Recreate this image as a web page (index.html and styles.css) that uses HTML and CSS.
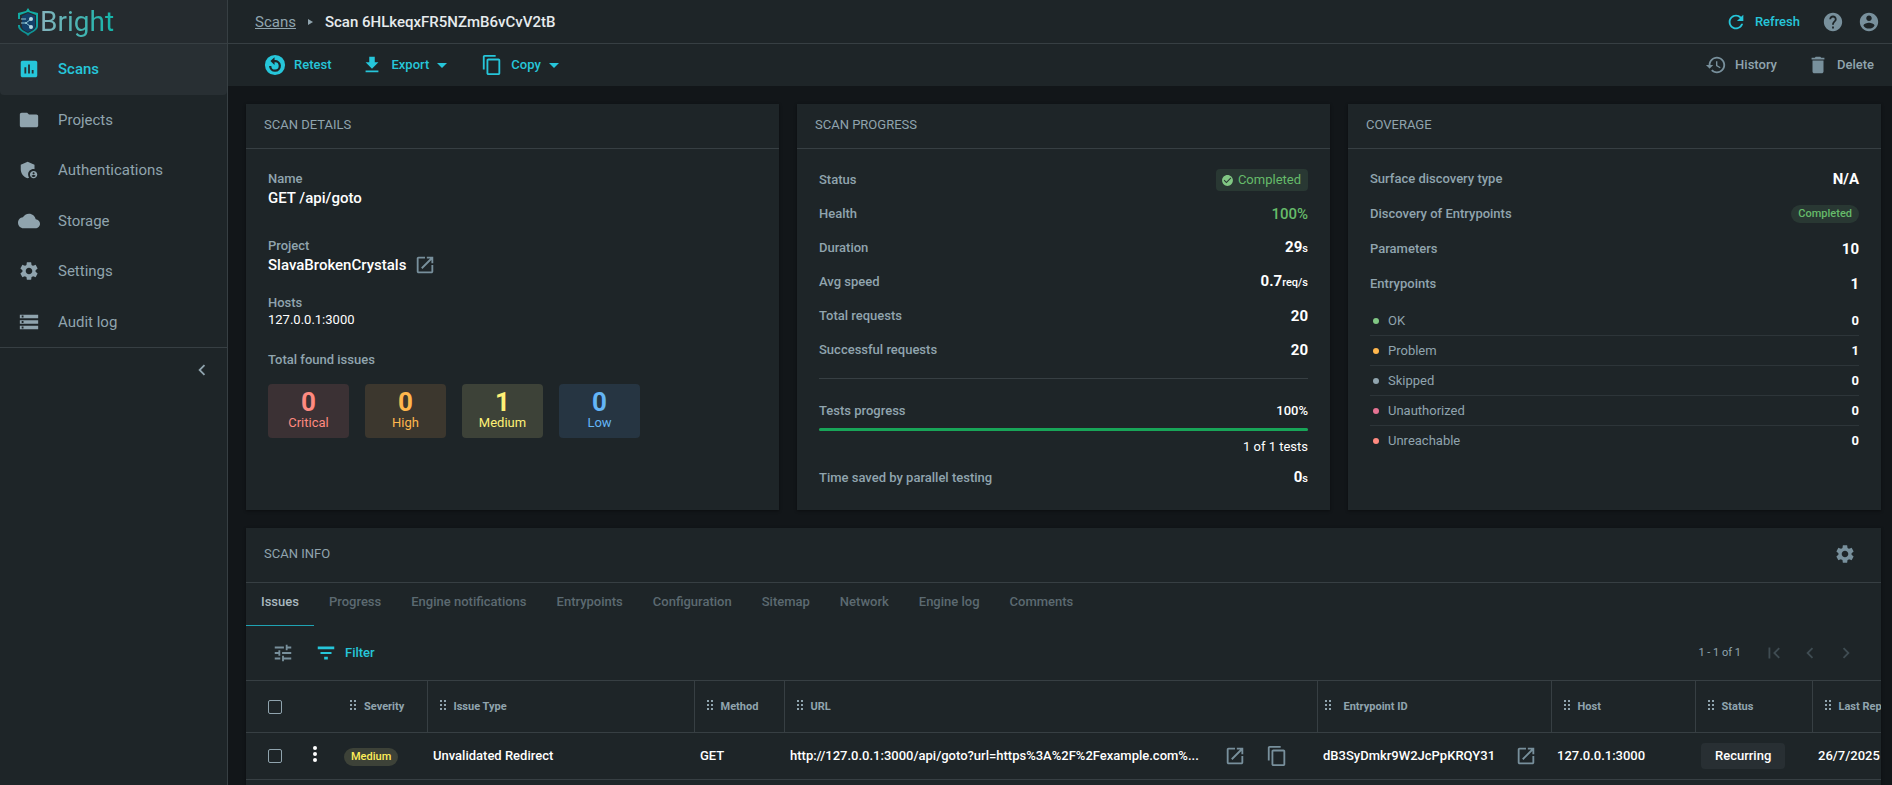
FILE: index.html
```
<!DOCTYPE html>
<html lang="en">
<head>
  <meta charset="UTF-8">
  <meta name="viewport" content="width=device-width, initial-scale=1.0">
  <title>Scan 6HLkeqxFR5NZmB6vCvV2tB</title>
  <link rel="stylesheet" href="styles.css">
</head>
<body>
  <!-- shared icons -->
  <svg class="sprite" aria-hidden="true">
    <symbol id="i-assessment" viewBox="0 0 24 24"><path d="M19 3H5c-1.1 0-2 .9-2 2v14c0 1.1.9 2 2 2h14c1.1 0 2-.9 2-2V5c0-1.1-.9-2-2-2zM9 17H7v-7h2v7zm4 0h-2V7h2v10zm4 0h-2v-4h2v4z"/></symbol>
    <symbol id="i-folder" viewBox="0 0 24 24"><path d="M10 4H4c-1.1 0-2 .9-2 2v12c0 1.1.9 2 2 2h16c1.1 0 2-.9 2-2V8c0-1.1-.9-2-2-2h-8l-2-2z"/></symbol>
    <symbol id="i-shield" viewBox="0 0 24 24"><path d="M17 11c.34 0 .67.04 1 .09V6.27L10.500 3 3 6.270v4.910c0 4.540 3.200 8.790 7.500 9.820.55-.13 1.080-.32 1.600-.55-.69-.98-1.100-2.170-1.100-3.450 0-3.310 2.690-6 6-6z"/><path d="M17 13c-2.210 0-4 1.790-4 4s1.790 4 4 4 4-1.790 4-4-1.790-4-4-4zm0 1.380c.62 0 1.120.51 1.120 1.120s-.51 1.120-1.120 1.120-1.120-.51-1.120-1.120.5-1.120 1.120-1.120zm0 5.370c-.93 0-1.740-.46-2.240-1.170.05-.72 1.510-1.080 2.240-1.080s2.190.36 2.240 1.080c-.5.71-1.310 1.170-2.240 1.170z"/></symbol>
    <symbol id="i-cloud" viewBox="0 0 24 24"><path d="M19.350 10.040C18.670 6.590 15.640 4 12 4 9.110 4 6.600 5.640 5.350 8.040 2.340 8.360 0 10.910 0 14c0 3.310 2.690 6 6 6h13c2.760 0 5-2.240 5-5 0-2.640-2.050-4.780-4.650-4.960z"/></symbol>
    <symbol id="i-settings" viewBox="0 0 24 24"><path d="M19.140 12.940c.04-.3.06-.61.06-.94 0-.32-.02-.64-.07-.94l2.030-1.580c.18-.14.23-.41.12-.61l-1.920-3.320c-.12-.22-.37-.29-.59-.22l-2.390.96c-.5-.38-1.030-.7-1.620-.94l-.36-2.540c-.04-.24-.24-.41-.48-.41h-3.840c-.24 0-.43.17-.47.41l-.36 2.540c-.59.24-1.130.57-1.620.94l-2.390-.96c-.22-.08-.47 0-.59.22L2.740 8.870c-.12.21-.08.47.12.61l2.030 1.580c-.05.3-.09.63-.09.94s.02.64.07.94l-2.030 1.580c-.18.14-.23.41-.12.61l1.920 3.320c.12.22.37.29.59.22l2.390-.96c.5.38 1.030.7 1.620.94l.36 2.540c.05.24.24.41.48.41h3.840c.24 0 .44-.17.47-.41l.36-2.540c.59-.24 1.130-.56 1.620-.94l2.390.96c.22.08.47 0 .59-.22l1.920-3.320c.12-.22.07-.47-.12-.61l-2.010-1.580zM12 15.600c-1.980 0-3.600-1.620-3.600-3.600s1.620-3.600 3.600-3.600 3.600 1.620 3.600 3.600-1.620 3.600-3.600 3.600z"/></symbol>
    <symbol id="i-storage" viewBox="0 0 24 24"><path d="M2 20h20v-4H2v4zm2-3h2v2H4v-2zM2 4v4h20V4H2zm4 3H4V5h2v2zm-4 7h20v-4H2v4zm2-3h2v2H4v-2z"/></symbol>
    <symbol id="i-chevron-left" viewBox="0 0 24 24"><path d="M15.410 7.410L14 6l-6 6 6 6 1.410-1.410L10.830 12z"/></symbol>
    <symbol id="i-chevron-right" viewBox="0 0 24 24"><path d="M10 6L8.590 7.410 13.170 12l-4.580 4.590L10 18l6-6z"/></symbol>
    <symbol id="i-first-page" viewBox="0 0 24 24"><path d="M18.410 16.590L13.820 12l4.590-4.590L17 6l-6 6 6 6zM6 6h2v12H6z"/></symbol>
    <symbol id="i-refresh" viewBox="0 0 24 24"><path d="M17.650 6.350C16.200 4.900 14.210 4 12 4c-4.420 0-7.990 3.580-7.990 8s3.570 8 7.990 8c3.730 0 6.840-2.550 7.730-6h-2.080c-.82 2.330-3.040 4-5.650 4-3.310 0-6-2.690-6-6s2.690-6 6-6c1.660 0 3.140.69 4.220 1.780L13 11h7V4l-2.350 2.350z"/></symbol>
    <symbol id="i-help" viewBox="0 0 24 24"><path d="M12 2C6.480 2 2 6.480 2 12s4.480 10 10 10 10-4.480 10-10S17.520 2 12 2zm1 17h-2v-2h2v2zm2.070-7.750l-.9.92C13.450 12.900 13 13.500 13 15h-2v-.5c0-1.100.45-2.100 1.170-2.830l1.240-1.260c.37-.36.59-.86.59-1.410 0-1.100-.9-2-2-2s-2 .9-2 2H8c0-2.210 1.790-4 4-4s4 1.790 4 4c0 .88-.36 1.680-.93 2.250z"/></symbol>
    <symbol id="i-account" viewBox="0 0 24 24"><path d="M12 2C6.480 2 2 6.480 2 12s4.480 10 10 10 10-4.480 10-10S17.520 2 12 2zm0 3c1.660 0 3 1.340 3 3s-1.340 3-3 3-3-1.340-3-3 1.340-3 3-3zm0 14.200c-2.500 0-4.710-1.280-6-3.220.03-1.990 4-3.080 6-3.080 1.990 0 5.970 1.090 6 3.080-1.290 1.940-3.500 3.220-6 3.220z"/></symbol>
    <symbol id="i-history" viewBox="0 0 24 24"><path d="M13 3c-4.970 0-9 4.030-9 9H1l3.890 3.890.07.14L9 12H6c0-3.870 3.130-7 7-7s7 3.130 7 7-3.130 7-7 7c-1.930 0-3.680-.79-4.940-2.060l-1.420 1.420C8.270 19.990 10.510 21 13 21c4.970 0 9-4.030 9-9s-4.030-9-9-9zm-1 5v5l4.280 2.540.72-1.210-3.500-2.080V8H12z"/></symbol>
    <symbol id="i-delete" viewBox="0 0 24 24"><path d="M6 19c0 1.100.9 2 2 2h8c1.100 0 2-.9 2-2V7H6v12zM19 4h-3.500l-1-1h-5l-1 1H5v2h14V4z"/></symbol>
    <symbol id="i-retest" viewBox="0 0 24 24"><path fill-rule="evenodd" d="M12 1a11 11 0 1 0 0 22 11 11 0 0 0 0-22zM11.500 3.500v3A6.500 6.500 0 1 1 5.500 13h2.500a4 4 0 1 0 3.500-4v3L7 7.700z"/></symbol>
    <symbol id="i-download" viewBox="0 0 24 24"><path d="M19 9h-4V3H9v6H5l7 7 7-7zM5 18v2h14v-2H5z"/></symbol>
    <symbol id="i-copy" viewBox="0 0 24 24"><path d="M16 1H4c-1.100 0-2 .9-2 2v14h2V3h12V1zm3 4H8c-1.100 0-2 .9-2 2v14c0 1.100.9 2 2 2h11c1.100 0 2-.9 2-2V7c0-1.100-.9-2-2-2zm0 16H8V7h11v14z"/></symbol>
    <symbol id="i-open" viewBox="0 0 24 24"><path d="M19 19H5V5h7V3H5c-1.110 0-2 .9-2 2v14c0 1.100.89 2 2 2h14c1.100 0 2-.9 2-2v-7h-2v7zM14 3v2h3.590l-9.830 9.830 1.410 1.410L19 6.410V10h2V3h-7z"/></symbol>
    <symbol id="i-check" viewBox="0 0 24 24"><path d="M12 2C6.480 2 2 6.480 2 12s4.480 10 10 10 10-4.480 10-10S17.520 2 12 2zm-2 15l-5-5 1.410-1.410L10 14.170l7.590-7.590L19 8l-9 9z"/></symbol>
    <symbol id="i-tune" viewBox="0 0 24 24"><path d="M3 17v2h6v-2H3zM3 5v2h10V5H3zm10 16v-2h8v-2h-8v-2h-2v6h2zM7 9v2H3v2h4v2h2V9H7zm14 4v-2H11v2h10zm-6-4h2V7h4V5h-4V3h-2v6z"/></symbol>
    <symbol id="i-filter" viewBox="0 0 24 24"><path d="M10 19h4v-3h-4v3zM3 5v3h18V5H3zm3 8h12v-2H6v2z"/></symbol>
    <symbol id="i-more" viewBox="0 0 6 18"><circle cx="3" cy="3" r="2"/><circle cx="3" cy="9" r="2"/><circle cx="3" cy="15" r="2"/></symbol>
    <symbol id="i-drag" viewBox="0 0 7 10"><path d="M0 0h2v2H0zM4 0h2v2H4zM0 4h2v2H0zM4 4h2v2H4zM0 8h2v2H0zM4 8h2v2H4z"/></symbol>
  </svg>

  <div class="app">
    <aside class="sidebar">
      <a class="logo" href="#">
        <svg class="logo-mark" viewBox="0 0 20 28">
          <defs>
            <linearGradient id="shield" x1="0" y1="0" x2="0" y2="1">
              <stop offset="0" stop-color="#14b3a8"/>
              <stop offset="1" stop-color="#0d8f94"/>
            </linearGradient>
          </defs>
          <path d="M10 0l2 3 8 2v13c0 4-5 6-8 8l-2 2-2-2c-3-2-8-4-8-8V5l8-2z" fill="url(#shield)"/>
          <path d="M10 4l8 3v11c0 3-4 5-8 7-4-2-8-4-8-7V7z" fill="#252b2f"/>
          <path d="M10 5l7 3v10c0 3-3 4-7 6-4-2-6-3-6-6V8z" fill="#12406a"/>
          <path d="M0 11h4v6H0z" fill="#252b2f"/>
          <path d="M13 11l-5 4 5 4M8 15H3M8 11H3" fill="none" stroke="#8fc5d2" stroke-width="1"/>
          <circle cx="13" cy="11" r="2" fill="#b7dbe3"/>
          <circle cx="8" cy="15" r="1" fill="#8fc5d2"/>
          <circle cx="13" cy="19" r="2" fill="#b7dbe3"/>
        </svg>
        <span class="logo-text">Bright</span>
      </a>
      <nav class="nav">
        <a class="nav-item active" href="#"><svg class="icon"><use href="#i-assessment"/></svg>Scans</a>
        <a class="nav-item" href="#"><svg class="icon"><use href="#i-folder"/></svg>Projects</a>
        <a class="nav-item" href="#"><svg class="icon"><use href="#i-shield"/></svg>Authentications</a>
        <a class="nav-item" href="#"><svg class="icon"><use href="#i-cloud"/></svg>Storage</a>
        <a class="nav-item" href="#"><svg class="icon"><use href="#i-settings"/></svg>Settings</a>
        <a class="nav-item" href="#"><svg class="icon"><use href="#i-storage"/></svg>Audit log</a>
      </nav>
      <button class="collapse" aria-label="Collapse menu"><svg class="icon"><use href="#i-chevron-left"/></svg></button>
    </aside>

    <div class="page">
      <header class="topbar">
        <div class="breadcrumbs">
          <a href="#">Scans</a>
          <span class="crumb-arrow"></span>
          <h1>Scan 6HLkeqxFR5NZmB6vCvV2tB</h1>
        </div>
        <div class="top-actions">
          <button class="btn primary refresh"><svg class="icon"><use href="#i-refresh"/></svg>Refresh</button>
          <button class="btn icon-btn" aria-label="Help"><svg class="icon"><use href="#i-help"/></svg></button>
          <button class="btn icon-btn" aria-label="Account"><svg class="icon"><use href="#i-account"/></svg></button>
        </div>
      </header>

      <div class="toolbar">
        <div class="tools">
          <button class="btn primary"><svg class="icon"><use href="#i-retest"/></svg>Retest</button>
          <button class="btn primary"><svg class="icon"><use href="#i-download"/></svg>Export<span class="caret"></span></button>
          <button class="btn primary"><svg class="icon"><use href="#i-copy"/></svg>Copy<span class="caret"></span></button>
        </div>
        <div class="tools tools-right">
          <button class="btn"><svg class="icon"><use href="#i-history"/></svg>History</button>
          <button class="btn"><svg class="icon"><use href="#i-delete"/></svg>Delete</button>
        </div>
      </div>

      <main class="content">
        <section class="card">
          <h2 class="card-title">Scan details</h2>
          <div class="details">
            <div class="field field-lg">
              <div class="label">Name</div>
              <div class="value">GET /api/goto</div>
            </div>
            <div class="field">
              <div class="label">Project</div>
              <div class="value">SlavaBrokenCrystals <a href="#" aria-label="Open project"><svg class="icon"><use href="#i-open"/></svg></a></div>
            </div>
            <div class="field">
              <div class="label">Hosts</div>
              <div class="value host">127.0.0.1:3000</div>
            </div>
            <div class="label">Total found issues</div>
            <div class="issues">
              <div class="issue critical"><b>0</b>Critical</div>
              <div class="issue high"><b>0</b>High</div>
              <div class="issue medium"><b>1</b>Medium</div>
              <div class="issue low"><b>0</b>Low</div>
            </div>
          </div>
        </section>

        <section class="card">
          <h2 class="card-title">Scan progress</h2>
          <div class="progress">
            <div class="row"><span>Status</span><span class="status"><svg class="icon"><use href="#i-check"/></svg>Completed</span></div>
            <div class="row"><span>Health</span><strong class="green">100%</strong></div>
            <div class="row"><span>Duration</span><strong>29<small>s</small></strong></div>
            <div class="row"><span>Avg speed</span><strong>0.7<small>req/s</small></strong></div>
            <div class="row"><span>Total requests</span><strong>20</strong></div>
            <div class="row"><span>Successful requests</span><strong>20</strong></div>
            <hr>
            <div class="row tests"><span>Tests progress</span><em>100%</em></div>
            <div class="bar"><div class="bar-fill" style="width: 100%"></div></div>
            <div class="tests-count">1 of 1 tests</div>
            <div class="row"><span>Time saved by parallel testing</span><strong>0<small>s</small></strong></div>
          </div>
        </section>

        <section class="card">
          <h2 class="card-title">Coverage</h2>
          <div class="coverage">
            <div class="row"><span>Surface discovery type</span><strong>N/A</strong></div>
            <div class="row"><span>Discovery of Entrypoints</span><span class="chip chip-green">Completed</span></div>
            <div class="row"><span>Parameters</span><strong>10</strong></div>
            <div class="row"><span>Entrypoints</span><strong>1</strong></div>
            <ul class="statuses">
              <li class="ok">OK<b>0</b></li>
              <li class="problem">Problem<b>1</b></li>
              <li class="skipped">Skipped<b>0</b></li>
              <li class="unauthorized">Unauthorized<b>0</b></li>
              <li class="unreachable">Unreachable<b>0</b></li>
            </ul>
          </div>
        </section>

        <section class="card info">
          <div class="info-head">
            <h2>Scan info</h2>
            <button class="btn icon-btn" aria-label="Settings"><svg class="icon"><use href="#i-settings"/></svg></button>
          </div>
          <div class="tabs">
            <button class="tab active">Issues</button>
            <button class="tab">Progress</button>
            <button class="tab">Engine notifications</button>
            <button class="tab">Entrypoints</button>
            <button class="tab">Configuration</button>
            <button class="tab">Sitemap</button>
            <button class="tab">Network</button>
            <button class="tab">Engine log</button>
            <button class="tab">Comments</button>
          </div>
          <div class="filters">
            <button class="btn icon-btn" aria-label="Columns"><svg class="icon"><use href="#i-tune"/></svg></button>
            <button class="btn primary filter"><svg class="icon"><use href="#i-filter"/></svg>Filter</button>
            <div class="pager">
              <span>1 - 1 of 1</span>
              <button class="btn icon-btn" aria-label="First page" disabled><svg class="icon"><use href="#i-first-page"/></svg></button>
              <button class="btn icon-btn" aria-label="Previous page" disabled><svg class="icon"><use href="#i-chevron-left"/></svg></button>
              <button class="btn icon-btn" aria-label="Next page" disabled><svg class="icon"><use href="#i-chevron-right"/></svg></button>
            </div>
          </div>
          <div class="table-wrap">
            <table>
              <colgroup>
                <col class="c-check"><col class="c-menu"><col class="c-severity"><col class="c-type"><col class="c-method">
                <col class="c-url"><col class="c-entry"><col class="c-host"><col class="c-status"><col class="c-last">
              </colgroup>
              <thead>
                <tr>
                  <th class="check"><input type="checkbox" aria-label="Select all"></th>
                  <th></th>
                  <th class="divided"><svg class="drag"><use href="#i-drag"/></svg>Severity</th>
                  <th class="divided"><svg class="drag"><use href="#i-drag"/></svg>Issue Type</th>
                  <th class="divided"><svg class="drag"><use href="#i-drag"/></svg>Method</th>
                  <th class="divided"><svg class="drag"><use href="#i-drag"/></svg>URL</th>
                  <th class="divided entry"><svg class="drag"><use href="#i-drag"/></svg>Entrypoint ID</th>
                  <th class="divided"><svg class="drag"><use href="#i-drag"/></svg>Host</th>
                  <th class="divided"><svg class="drag"><use href="#i-drag"/></svg>Status</th>
                  <th><svg class="drag"><use href="#i-drag"/></svg>Last Reported</th>
                </tr>
              </thead>
              <tbody>
                <tr>
                  <td class="check"><input type="checkbox" aria-label="Select issue"></td>
                  <td><button class="more" aria-label="Issue menu"><svg><use href="#i-more"/></svg></button></td>
                  <td><span class="chip chip-yellow">Medium</span></td>
                  <td>Unvalidated Redirect</td>
                  <td>GET</td>
                  <td>
                    <div class="cell">
                      <span class="url">http://127.0.0.1:3000/api/goto?url=https%3A%2F%2Fexample.com%...</span>
                      <a href="#" aria-label="Open URL"><svg class="icon"><use href="#i-open"/></svg></a>
                      <button class="btn icon-btn" aria-label="Copy URL"><svg class="icon"><use href="#i-copy"/></svg></button>
                    </div>
                  </td>
                  <td>
                    <div class="cell">
                      <span class="entry-id">dB3SyDmkr9W2JcPpKRQY31</span>
                      <a href="#" aria-label="Open entrypoint"><svg class="icon"><use href="#i-open"/></svg></a>
                    </div>
                  </td>
                  <td>127.0.0.1:3000</td>
                  <td><span class="tag">Recurring</span></td>
                  <td>26/7/2025</td>
                </tr>
              </tbody>
            </table>
          </div>
        </section>
      </main>
    </div>
  </div>
</body>
</html>
```
FILE: styles.css
```
* {
  box-sizing: border-box;
}
body {
  margin: 0;
  font-family: Roboto, "Liberation Sans", sans-serif;
  font-size: 13px;
  line-height: 18px;
  color: #90a4ae;
  background: #121619;
}
h1, h2, ul, hr {
  margin: 0;
  padding: 0;
  font-weight: 400;
}
a {
  color: inherit;
}
button {
  font: inherit;
  color: inherit;
  background: none;
  border: none;
  padding: 0;
  cursor: pointer;
}
svg {
  fill: currentColor;
}
.sprite {
  display: none;
}
.icon {
  display: block;
  flex: none;
  width: 22px;
  height: 22px;
}
.app {
  display: flex;
  height: 100vh;
  overflow: hidden;
}

/* sidebar */
.sidebar {
  flex: none;
  width: 228px;
  background: #1e2528;
  border-right: 1px solid #373f43;
}
.logo {
  display: flex;
  align-items: center;
  gap: 2px;
  height: 44px;
  padding-left: 18px;
  background: #252b2f;
  border-bottom: 1px solid #373f43;
  text-decoration: none;
}
.logo-mark {
  width: 20px;
  height: 28px;
}
.logo-text {
  font-size: 28px;
  line-height: 42px;
  background: linear-gradient(90deg, #86b3bd, #12b5a9);
  background-clip: text;
  color: transparent;
}
.nav {
  display: grid;
  grid-auto-rows: 1fr;
  height: 304px;
  border-bottom: 1px solid #373f43;
}
.nav-item {
  display: flex;
  align-items: center;
  gap: 18px;
  padding-left: 18px;
  font-size: 15px;
  text-decoration: none;
}
.nav-item.active {
  color: #26c6da;
  background: #282f33;
  border-radius: 0 0 4px 4px;
  font-weight: 500;
}
.collapse {
  display: block;
  margin: 11px 14px 0 auto;
}

/* header */
.page {
  flex: 1;
  min-width: 0;
}
.topbar,
.toolbar {
  display: flex;
  justify-content: space-between;
  align-items: center;
  background: #1e2528;
}
.topbar {
  height: 44px;
  padding: 0 12px 0 27px;
  border-bottom: 1px solid #373f43;
}
.toolbar {
  height: 42px;
  padding: 0 18px 0 36px;
}
.breadcrumbs,
.top-actions,
.tools {
  display: flex;
  align-items: center;
}
.breadcrumbs {
  gap: 12px;
  font-size: 15px;
}
.breadcrumbs h1 {
  font-size: 15px;
  font-weight: 500;
  color: #e6ebed;
}
.crumb-arrow {
  border: 3px solid transparent;
  border-left: 5px solid #90a4ae;
  border-right: 0;
}
.top-actions {
  gap: 14px;
  color: #78909c;
}
.refresh {
  margin-right: 8px;
}
.tools {
  gap: 30px;
}
.btn {
  display: flex;
  align-items: center;
  gap: 8px;
  font-weight: 500;
}
.primary {
  color: #26c6da;
}
.tools-right .icon {
  color: #78909c;
}
.caret {
  margin-right: 4px;
  border: 5px solid transparent;
  border-top-color: currentColor;
  border-bottom: 0;
}

/* cards */
.content {
  display: grid;
  grid-template-columns: repeat(3, minmax(0, 1fr));
  gap: 18px;
  padding: 18px 11px 0 18px;
}
.card {
  min-width: 0;
  background: #1e2528;
  box-shadow: 0 1px 3px rgba(0, 0, 0, 0.4);
}
.card-title,
.info-head h2 {
  font-size: 13px;
  text-transform: uppercase;
}
.card-title {
  padding: 12px 18px 14px;
  border-bottom: 1px solid #373f43;
}
.details,
.progress,
.coverage {
  padding: 21px 22px 15px;
}
.label {
  font-weight: 500;
}
.field {
  margin-bottom: 19px;
}
.field-lg {
  margin-bottom: 29px;
}
.value {
  display: flex;
  align-items: center;
  gap: 8px;
  height: 20px;
  font-size: 15px;
  font-weight: 500;
  color: #fff;
}
.value a,
.cell a {
  color: #78909c;
}
.value.host {
  font-size: 13px;
  font-weight: 400;
  line-height: 16px;
  align-items: flex-start;
}
.issues {
  display: flex;
  gap: 16px;
  margin-top: 15px;
}
.issue {
  width: 81px;
  height: 54px;
  padding-top: 6px;
  border-radius: 4px;
  text-align: center;
}
.issue b {
  display: block;
  font-size: 26px;
  line-height: 24px;
}
.critical {
  color: #ff8a80;
  background: #3b3134;
}
.high {
  color: #ffb74d;
  background: #3c372e;
}
.medium {
  color: #fff176;
  background: #3d4238;
}
.low {
  color: #64b5f6;
  background: #263542;
}
.row {
  display: flex;
  justify-content: space-between;
  align-items: center;
  height: 34px;
  font-weight: 500;
}
.row strong {
  font-size: 15px;
  font-weight: 700;
  color: #fff;
}
.row small {
  font-size: 11px;
  font-weight: 500;
}
.row em {
  font-style: normal;
  color: #fff;
}
.row strong.green {
  color: #66bb6a;
  font-weight: 500;
}
.progress {
  padding-top: 14px;
}
.progress hr {
  margin-top: 11px;
  border: 0;
  border-top: 1px solid #373f43;
}
.status {
  display: flex;
  align-items: center;
  gap: 4px;
  height: 22px;
  padding: 0 7px 0 5px;
  border-radius: 4px;
  color: #66bb6a;
  background: #293833;
  font-weight: 400;
}
.status .icon {
  width: 13px;
  height: 13px;
  color: #81c784;
}
.tests {
  margin-top: 15px;
}
.bar {
  height: 3px;
  border-radius: 2px;
  background: #2d3a38;
}
.bar-fill {
  height: 3px;
  border-radius: 2px;
  background: #18a558;
}
.tests-count {
  margin: 7px 0 5px;
  text-align: right;
  color: #fff;
}
.coverage {
  padding-top: 12px;
}
.coverage .row {
  height: 35px;
}
.chip {
  display: inline-block;
  height: 18px;
  padding: 0 7px;
  border-radius: 9px;
  font-size: 11px;
  font-weight: 500;
}
.chip-green {
  color: #66bb6a;
  background: #293833;
}
.chip-yellow {
  color: #ffee58;
  background: #3d4238;
}
.statuses {
  margin-top: 5px;
  list-style: none;
}
.statuses li {
  display: flex;
  align-items: center;
  height: 30px;
  border-bottom: 1px solid #2d3539;
}
.statuses li:last-child {
  border-bottom: 0;
}
.statuses li::before {
  content: "";
  width: 6px;
  height: 6px;
  margin: 0 9px 0 3px;
  border-radius: 50%;
  background: #90a4ae;
}
.statuses b {
  margin-left: auto;
  color: #fff;
}
.statuses .ok::before {
  background: #81c784;
}
.statuses .problem::before {
  background: #ffb74d;
}
.statuses .unauthorized::before {
  background: #e57393;
}
.statuses .unreachable::before {
  background: #ff8a80;
}

/* scan info */
.info {
  grid-column: 1 / -1;
  height: 300px;
}
.info-head {
  display: flex;
  justify-content: space-between;
  align-items: center;
  height: 55px;
  padding: 0 25px 3px 18px;
  border-bottom: 1px solid #373f43;
}
.icon-btn {
  color: #78909c;
}
.tabs {
  display: flex;
}
.tab {
  height: 43px;
  padding: 0 15px 5px;
  font-weight: 500;
  color: #5c6a71;
  border-bottom: 1px solid transparent;
}
.tab.active {
  color: #a9b8bf;
  border-bottom-color: #1fa3b3;
}
.filters {
  display: flex;
  align-items: center;
  height: 54px;
  padding: 0 24px 0 26px;
}
.filter {
  margin-left: 21px;
}
.pager {
  display: flex;
  align-items: center;
  gap: 14px;
  margin-left: auto;
  font-size: 11px;
}
.pager span {
  margin-right: 8px;
}
.pager .btn {
  color: #3f4c52;
}
.table-wrap {
  overflow: hidden;
}
table {
  width: 1726px;
  table-layout: fixed;
  border-collapse: collapse;
}
.c-check { width: 52px; }
.c-menu { width: 40px; }
.c-severity { width: 89px; }
.c-type { width: 267px; }
.c-method { width: 90px; }
.c-url { width: 533px; }
.c-entry { width: 234px; }
.c-host { width: 144px; }
.c-status { width: 117px; }
.c-last { width: 160px; }
th,
td {
  border-top: 1px solid #373f43;
  border-bottom: 1px solid #373f43;
  text-align: left;
  white-space: nowrap;
}
th {
  height: 52px;
  padding: 0 12px;
  font-size: 11px;
  font-weight: 700;
}
th.divided {
  border-right: 1px solid #373f43;
}
th.entry {
  padding-left: 7px;
}
td {
  height: 47px;
  padding: 0 6px;
  font-weight: 500;
  color: #fff;
}
.check {
  padding: 0 0 0 22px;
}
.check input {
  display: block;
  appearance: none;
  width: 14px;
  height: 14px;
  margin: 0;
  border: 1px solid #90a4ae;
  border-radius: 2px;
}
.drag {
  width: 7px;
  height: 10px;
  margin-right: 7px;
}
.entry .drag {
  margin-right: 12px;
}
.more svg {
  display: block;
  width: 22px;
  height: 18px;
}
.cell {
  display: flex;
  align-items: center;
}
.url {
  flex: none;
  width: 434px;
}
.cell .btn {
  margin-left: 20px;
}
.entry-id {
  flex: none;
  width: 192px;
}
.tag {
  display: inline-block;
  padding: 4px 14px;
  border-radius: 4px;
  background: #282f33;
}
```
